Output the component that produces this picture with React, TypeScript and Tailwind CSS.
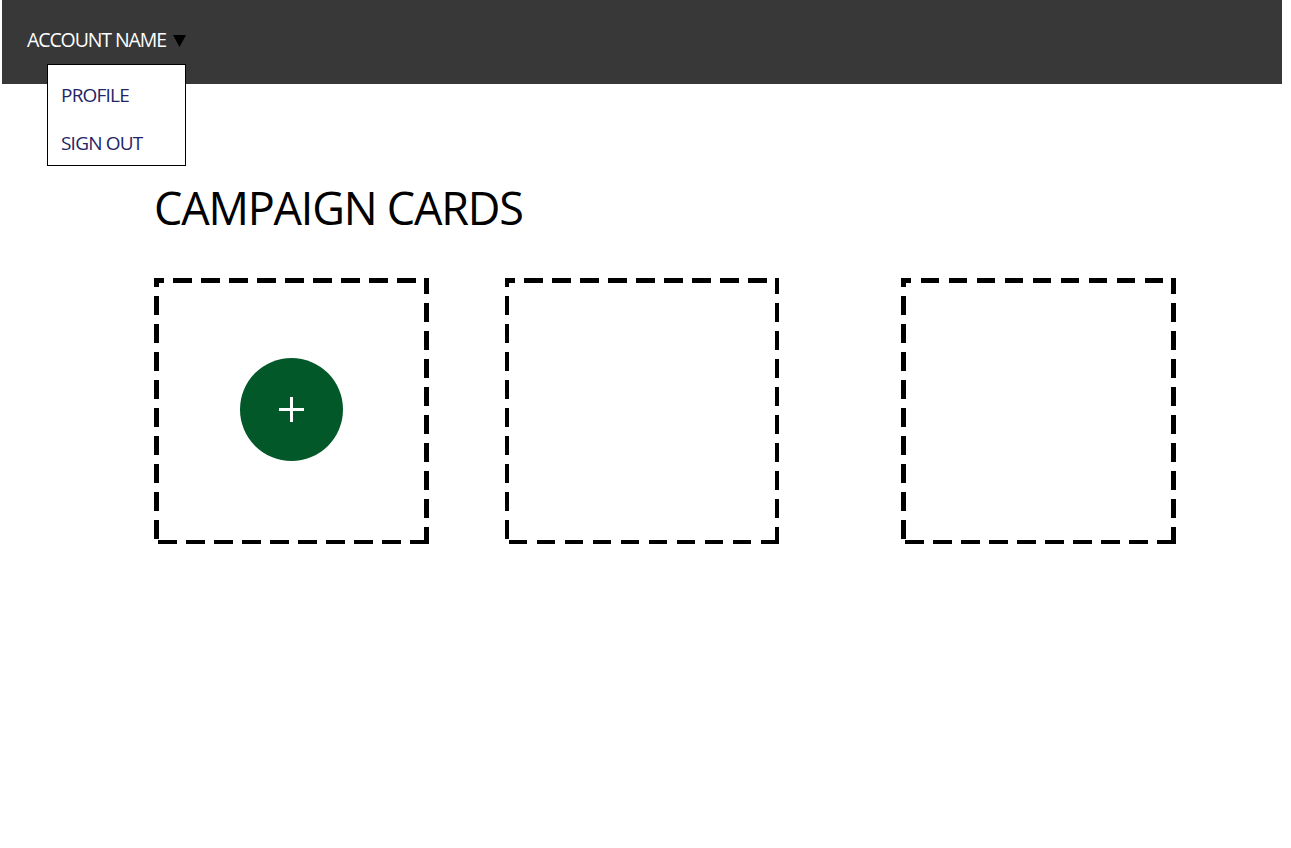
const cards = [
  { id: 1, width: 275, side: 5, topDash: "19 9", topOffset: 9, bottomDash: "19 9", hasAdd: true, gap: "mr-[76px]" },
  { id: 2, width: 274, side: 4, topDash: "19 9", topOffset: 9, bottomDash: "18 10", hasAdd: false, gap: "mr-[122px]" },
  { id: 3, width: 275, side: 5, topDash: "18 10", topOffset: 8, bottomDash: "19 9", hasAdd: false, gap: "" },
];

type FrameProps = { width: number; side: number; topDash: string; topOffset: number; bottomDash: string };

function DashedFrame({ width, side, topDash, topOffset, bottomDash }: FrameProps) {
  // each side has its own dash phase in the mockup, so four lines rather than one rect
  return (
    <svg className="absolute inset-0 h-full w-full" viewBox={`0 0 ${width} 266`} fill="none" stroke="#000">
      <line x1="0" y1="2.5" x2={width - 5} y2="2.5" strokeWidth="5" strokeDasharray={topDash} strokeDashoffset={topOffset} />
      <line x1={width - side / 2} y1="0" x2={width - side / 2} y2="266" strokeWidth={side} strokeDasharray="19 9" strokeDashoffset="3" />
      <line x1="4" y1="264" x2={width} y2="264" strokeWidth="4" strokeDasharray={bottomDash} />
      <line x1={side / 2} y1="0" x2={side / 2} y2="261" strokeWidth={side} strokeDasharray="19 9" strokeDashoffset="10" />
    </svg>
  );
}

export default function App() {
  return (
    <div className="relative min-h-[848px] bg-white font-['Open_Sans',sans-serif]">
      <header className="ml-[2px] flex h-[84px] w-[1280px] items-center gap-[7px] bg-[#383838] pb-[4px] pl-[25px]">
        <span className="text-[19.5px] leading-none tracking-[-1.1px] text-white">ACCOUNT NAME</span>
        <svg className="mt-[2px] h-[12px] w-[13px]" viewBox="0 0 13 12">
          <polygon points="0,0 13,0 6.5,12" fill="#000" />
        </svg>
      </header>

      {/* open account menu */}
      <div className="absolute left-[47px] top-[64px] flex h-[102px] w-[139px] flex-col border border-black bg-white pl-[13px] pt-[18px] text-[19px] leading-[24px] tracking-[-0.8px] text-[#1f2566]">
        <span>PROFILE</span>
        <span className="mt-[24px]">SIGN OUT</span>
      </div>

      <main className="pl-[154px] pt-[94px]">
        <h1 className="text-[45px] leading-[60px] tracking-[-1.2px] text-black">CAMPAIGN CARDS</h1>
        <div className="mt-[40px] flex">
          {cards.map((card) => (
            <div
              key={card.id}
              className={`relative flex h-[266px] items-center justify-center ${card.width === 274 ? "w-[274px]" : "w-[275px]"} ${card.gap}`}
            >
              <DashedFrame
                width={card.width}
                side={card.side}
                topDash={card.topDash}
                topOffset={card.topOffset}
                bottomDash={card.bottomDash}
              />
              {card.hasAdd && (
                <button
                  type="button"
                  className="relative mb-[3px] flex h-[103px] w-[103px] items-center justify-center rounded-full bg-[#03582a]"
                >
                  <svg className="h-[25px] w-[25px]" viewBox="0 0 25 25" stroke="#fff" strokeWidth="3">
                    <line x1="0" y1="12.5" x2="25" y2="12.5" />
                    <line x1="12.5" y1="0" x2="12.5" y2="25" />
                  </svg>
                </button>
              )}
            </div>
          ))}
        </div>
      </main>
    </div>
  );
}
